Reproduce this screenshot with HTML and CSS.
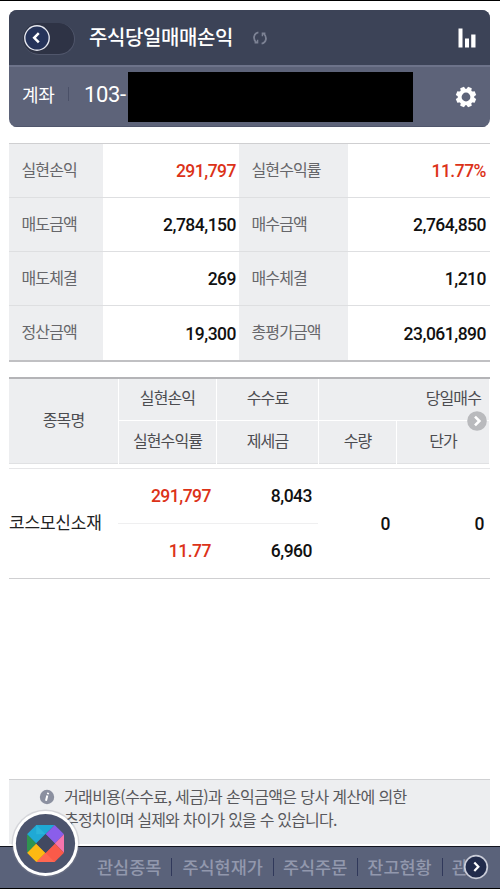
FILE: index.html
```html
<!doctype html>
<html lang="ko">
<head>
    <meta charset="UTF-8">
    <meta name="viewport" content="width=device-width, initial-scale=1.0">
    <title>주식당일매매손익</title>
    <link rel="stylesheet" href="styles.css">
</head>
<body>
<div class="page">
    <div class="header">
        <div class="title_bar">
            <div class="back">
                <svg width="26" height="26" viewBox="0 0 26 26">
                    <circle cx="13" cy="13" r="12.2" fill="#26345a" stroke="#e4e6ee" stroke-width="1.4"/>
                    <path d="M14.8 8.2L10.2 12.8L14.8 17.4" fill="none" stroke="#fff" stroke-width="2.5"/>
                </svg>
            </div>
            <h1>주식당일매매손익</h1>
            <svg class="refresh" width="14" height="14" viewBox="0 0 14 14">
                <g fill="none" stroke="#7c8294" stroke-width="1.8">
                    <path d="M5.4 1.4C0.4 2.3 -0.3 8.6 3.4 11.2M8.6 12.6C13.6 11.7 14.3 5.4 10.6 2.8"/>
                    <path d="M4.6 8.8V11.8H1.6M9.4 5.2V2.2H12.4" stroke-width="1.4"/>
                </g>
            </svg>
            <svg class="chart" width="18" height="20" viewBox="0 0 18 20">
                <path d="M0.5 0.5H4.5V19.5H0.5ZM7 10.5H11V19.5H7ZM13.2 6.5H17.5V19.5H13.2Z" fill="#fff"/>
            </svg>
        </div>
        <div class="account">
            <span class="account_name">계좌</span>
            <span class="account_no">103-</span>
            <span class="mask"></span>
            <svg class="gear" width="22" height="22" viewBox="-11 -11 22 22">
                <g fill="#fff">
                    <circle r="8.3"/>
                    <path id="tooth" d="M-2.7 -7L-2 -10.2H2L2.7 -7Z" transform="rotate(22.5)"/>
                    <use href="#tooth" transform="rotate(45)"/>
                    <use href="#tooth" transform="rotate(90)"/>
                    <use href="#tooth" transform="rotate(135)"/>
                    <use href="#tooth" transform="rotate(180)"/>
                    <use href="#tooth" transform="rotate(225)"/>
                    <use href="#tooth" transform="rotate(270)"/>
                    <use href="#tooth" transform="rotate(315)"/>
                </g>
                <circle r="4.4" fill="#5d6379"/>
            </svg>
        </div>
    </div>

    <div class="summary">
        <div class="label">실현손익</div><div class="value red">291,797</div>
        <div class="label">실현수익률</div><div class="value red">11.77%</div>
        <div class="label">매도금액</div><div class="value">2,784,150</div>
        <div class="label">매수금액</div><div class="value">2,764,850</div>
        <div class="label">매도체결</div><div class="value">269</div>
        <div class="label">매수체결</div><div class="value">1,210</div>
        <div class="label">정산금액</div><div class="value">19,300</div>
        <div class="label">총평가금액</div><div class="value">23,061,890</div>
    </div>

    <div class="list_head">
        <div class="name">종목명</div>
        <div>실현손익</div>
        <div>수수료</div>
        <div class="wide">당일매수</div>
        <div>실현수익률</div>
        <div>제세금</div>
        <div>수량</div>
        <div>단가</div>
        <svg class="more" width="20" height="20" viewBox="0 0 20 20">
            <circle cx="10" cy="10" r="9.8" fill="#b9babd"/>
            <path d="M8 5.6L12.4 10L8 14.4" fill="none" stroke="#fff" stroke-width="2.6"/>
        </svg>
    </div>

    <div class="list_row">
        <div class="name">코스모신소재</div>
        <div class="num red line">291,797</div>
        <div class="num line">8,043</div>
        <div class="num tall">0</div>
        <div class="num tall">0</div>
        <div class="num red">11.77</div>
        <div class="num">6,960</div>
    </div>

    <div class="notice">
        <svg width="16" height="16" viewBox="0 0 16 16">
            <circle cx="8" cy="8" r="7.2" fill="#8b90a0"/>
            <path d="M8.3 6.6L7 11.8M9.2 3.7L8.8 5.2" stroke="#fff" stroke-width="2"/>
        </svg>
        <p>거래비용(수수료, 세금)과 손익금액은 당사 계산에 의한<br><span>추정치이며 실제와 차이가 있을 수 있습니다.</span></p>
    </div>
</div>

<div class="footer">
    <div class="menu">
        <span>관심종목</span><i></i><span>주식현재가</span><i></i><span>주식주문</span><i></i><span>잔고현황</span><i></i><span>관</span>
    </div>
    <svg class="next" width="26" height="26" viewBox="0 0 26 26">
        <circle cx="13" cy="13" r="11.3" fill="#212b4b" stroke="#c9ccd8" stroke-width="1.7"/>
        <path d="M11.3 8.5L15.4 12.8L11.3 17.1" fill="none" stroke="#fff" stroke-width="2.2"/>
    </svg>
    <svg class="home" width="77" height="77" viewBox="-38.5 -38.5 77 77">
        <circle r="34" fill="#8a8d96" opacity=".25"/>
        <circle r="32.6" fill="#fff"/>
        <circle r="29.6" fill="#4c546d"/>
        <path d="M-18.5 -9.2L-9.2 -18.5H9.2L-9.3 0Z" fill="#1fa9d5"/>
        <path d="M-9.2 -18.5L0 -9.3L-9.3 -9.2Z" fill="#2bb4da"/>
        <path d="M9.2 -18.5L18.5 -9.2L9.3 0L0 -9.3Z" fill="#8a5eea"/>
        <path d="M18.5 -9.2V9.2L9.3 0Z" fill="#f774ad"/>
        <path d="M18.5 9.2L9.2 18.5H-9.2L9.3 0Z" fill="#fa5a49"/>
        <path d="M0 9.3L9.2 18.5H-9.2Z" fill="#ff6752"/>
        <path d="M-9.3 0L0 9.3L-9.2 18.5L-18.5 9.2Z" fill="#fdb913"/>
        <path d="M-18.5 -9.2L-9.3 0L-18.5 9.2Z" fill="#2f9450"/>
        <path d="M0 -9.5L9.5 0L0 9.5L-9.5 0Z" fill="#414961"/>
    </svg>
</div>
</body>
</html>
```

FILE: styles.css
```css
* {
    margin: 0;
    padding: 0;
    box-sizing: border-box;
}

body {
    width: 500px;
    height: 889px;
    overflow: hidden;
    display: flex;
    flex-direction: column;
    background: #fff;
    border-top: 1px solid #000;
    font-family: "Noto Sans CJK KR", sans-serif;
    font-size: 16px;
    letter-spacing: -0.9px;
    color: #4c4c50;
}

svg {
    display: block;
    flex: none;
}

.page {
    flex: 1;
    display: flex;
    flex-direction: column;
    padding: 9px 10px 0 9px;
}

/* 상단 */
.header {
    height: 117px;
    border-radius: 8px;
    overflow: hidden;
    background: #5d6379;
    color: #fff;
}

.title_bar {
    height: 55px;
    display: flex;
    align-items: center;
    padding: 0 14px;
    background: #3c4357;
}

.back {
    width: 52px;
    height: 32px;
    margin-top: 2px;
    padding: 2px 1px;
    border-radius: 16px;
    background: #2e3345;
    border-right: 1px solid #50566b;
    border-bottom: 1px solid #50566b;
}

.title_bar h1 {
    margin: -2px 0 0 14px;
    font-size: 20px;
    font-weight: 500;
    line-height: 30px;
    letter-spacing: -0.4px;
}

.refresh {
    margin-left: 20px;
}

.chart {
    margin-left: auto;
}

.account {
    height: 62px;
    display: flex;
    align-items: center;
    padding: 0 13px;
    border-top: 2px solid #6d738a;
    border-bottom: 1px solid #50566c;
}

.account_name {
    width: 47px;
    margin-top: -5px;
    font-size: 18px;
    line-height: 14px;
    letter-spacing: -0.3px;
    border-right: 1px solid #4a5067;
}

.account_no {
    width: 44px;
    margin: -5px 0 0 15px;
    font-family: Roboto, sans-serif;
    font-size: 22px;
    letter-spacing: -0.4px;
}

.mask {
    width: 285px;
    height: 50px;
    background: #000;
}

.gear {
    margin-left: auto;
}

/* 손익 요약 */
.summary {
    height: 219px;
    margin-top: 16px;
    display: grid;
    grid-template-columns: 94px 136px 109px 142px;
    grid-template-rows: repeat(4, 1fr);
    border-top: 1px solid #cfcfd1;
    border-bottom: 2px solid #c0c0c3;
}

.summary div {
    display: flex;
    align-items: center;
    border-bottom: 1px solid #dedfe1;
}

.summary div:nth-last-child(-n+4) {
    border-bottom: 0;
}

.summary .label {
    padding: 0 0 4px 12.5px;
    background: #edeef0;
    color: #66666a;
}

.summary .value {
    justify-content: flex-end;
    padding: 1px 3px 0 0;
}

.summary .value:nth-child(4n) {
    padding-right: 4px;
}

.value,
.num {
    font-family: Roboto, sans-serif;
    font-size: 17.5px;
    font-weight: 500;
    letter-spacing: -0.5px;
    color: #111;
}

.summary .red,
.list_row .red {
    color: #dc3218;
}

/* 종목 리스트 */
.list_head {
    position: relative;
    height: 88px;
    margin-top: 15px;
    display: grid;
    grid-template-columns: 110px 98px 102px 78px 93px;
    grid-template-rows: 42px 44px;
    background: #edeef0;
    border-top: 2px solid #b4b4b7;
    border-bottom: 2px solid #e0e1e3;
}

.list_head div {
    display: flex;
    align-items: center;
    justify-content: center;
    padding-bottom: 5px;
    border-right: 1px solid #fff;
    border-bottom: 1px solid #fff;
}

.list_head .name {
    grid-row: span 2;
    padding-bottom: 6px;
}

.list_head .wide {
    grid-column: span 2;
    justify-content: flex-end;
    padding-right: 8px;
}

.more {
    position: absolute;
    right: 3px;
    top: 32px;
}

.list_row {
    height: 111px;
    margin-top: 3px;
    display: grid;
    grid-template-columns: 109px 99px 101px 78px 94px;
    grid-template-rows: 1fr 1fr;
    border-top: 1px solid #e6e6e8;
    border-bottom: 1px solid #cfcfd1;
}

.list_row .name {
    grid-row: span 2;
    display: flex;
    align-items: center;
    padding-bottom: 4px;
    font-size: 17px;
    letter-spacing: -0.2px;
    color: #222;
}

.list_row .num {
    display: flex;
    align-items: center;
    justify-content: flex-end;
    padding: 1px 6px 0 0;
}

.list_row .line {
    border-bottom: 1px solid #efeff0;
}

.list_row .tall {
    grid-row: span 2;
}

/* 안내 문구 */
.notice {
    height: 65px;
    margin-top: auto;
    margin-bottom: 2px;
    display: flex;
    padding: 5px 0 0 30px;
    background: #edeef0;
    border-top: 1px solid #cfd0d2;
    color: #58585c;
}

.notice svg {
    margin: 4px 9px 0 0;
}

.notice p {
    font-size: 16px;
    line-height: 23px;
    letter-spacing: -0.63px;
    white-space: nowrap;
}

.notice p span {
    letter-spacing: -0.8px;
}

/* 하단 메뉴 */
.footer {
    position: relative;
    height: 43px;
    background: #5a627a;
    border-top: 1px solid #11131d;
    border-bottom: 1px solid #000;
}

.menu {
    display: flex;
    align-items: center;
    padding: 6px 0 0 97px;
    white-space: nowrap;
    font-size: 17.5px;
    font-weight: 500;
    line-height: 28px;
    letter-spacing: 0;
    color: #9298ad;
}

.menu i {
    flex: none;
    width: 1px;
    height: 18px;
    margin: 0 10px;
    background: #30385a;
}

.menu span:nth-of-type(n+3) {
    margin-left: -1px;
}

.next {
    position: absolute;
    right: 11px;
    top: 7px;
}

.home {
    position: absolute;
    left: 7px;
    top: -42px;
}
```
